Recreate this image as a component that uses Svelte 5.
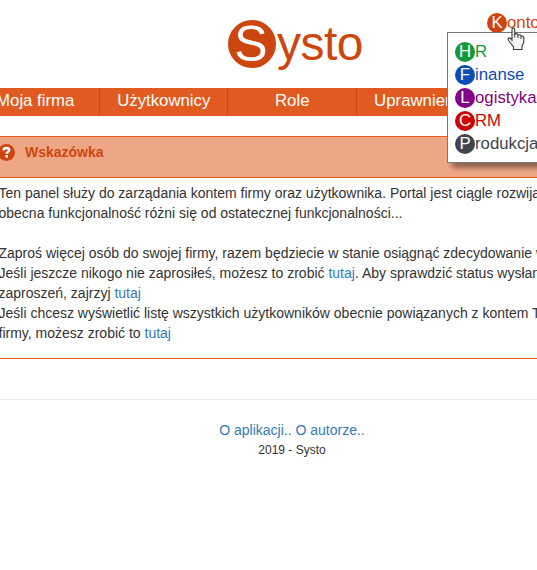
<script>
  const tabs = ['Moja firma', 'Użytkownicy', 'Role', 'Uprawnienia'];
  const modules = [
    { initial: 'H', rest: 'R', color: '#159838' },
    { initial: 'F', rest: 'inanse', color: '#0b4db5' },
    { initial: 'L', rest: 'ogistyka', color: '#820386' },
    { initial: 'C', rest: 'RM', color: '#cb0505' },
    { initial: 'P', rest: 'rodukcja', color: '#42444d' }
  ];
  const lines = [
    ['Ten panel służy do zarządania kontem firmy oraz użytkownika. Portal jest ciągle rozwijany,'],
    ['obecna funkcjonalność różni się od ostatecznej funkcjonalności...'],
    [],
    ['Zaproś więcej osób do swojej firmy, razem będziecie w stanie osiągnąć zdecydowanie więcej.'],
    ['Jeśli jeszcze nikogo nie zaprosiłeś, możesz to zrobić ', { label: 'tutaj' }, '. Aby sprawdzić status wysłanych'],
    ['zaproszeń, zajrzyj ', { label: 'tutaj' }],
    ['Jeśli chcesz wyświetlić listę wszystkich użytkowników obecnie powiązanych z kontem Twojej'],
    ['firmy, możesz zrobić to ', { label: 'tutaj' }]
  ];
</script>

<div class="page">
  <header>
    <div class="logo"><span class="disc">S</span><span class="name">ysto</span></div>
    <div class="account">
      <span class="item"><i>K</i>onto</span>
      <div class="menu">
        {#each modules as m}
          <a class="item" href="#top" style:--c={m.color}><i>{m.initial}</i>{m.rest}</a>
        {/each}
      </div>
      <svg class="pointer" width="18" height="24" viewBox="0 0 18 24">
        <path d="M5 14V2.6Q5 1 6.3 1Q7.7 1 7.7 2.6V7.2Q10.6 5.8 11 8Q13.6 7.2 14 9Q16.8 8.6 16.8 11V15.5L15 19V22.5H6.5V20L2 14Q0.5 11.8 1.6 11Q3 10.4 5 13Z" fill="#f6f3f7" stroke="#3a3a3a" stroke-width="1.1" />
        <path d="M7.7 7V10.5M11 8V11M14 9V12" fill="none" stroke="#3a3a3a" />
      </svg>
    </div>
  </header>

  <nav>
    {#each tabs as tab}<a href="#top">{tab}</a>{/each}
  </nav>

  <section>
    <h2>
      <svg width="17" height="17" viewBox="0 0 17 17">
        <circle cx="8.5" cy="8.5" r="8.5" fill="#cd460f" />
        <path d="M5.5 6.4Q5.8 4 8.5 4Q11.2 4 11.2 6Q11.2 7.2 9.7 8Q8.7 8.6 8.7 9.8" fill="none" stroke="#fff" stroke-width="2.5" />
        <path d="M7.4 11H10V13.5H7.4Z" fill="#fff" />
      </svg>
      <span>Wskazówka</span>
    </h2>
    <div class="body">
      {#each lines as line}
        <div class="line">{#each line as part}{#if part.label}<a href="#top">{part.label}</a>{:else}{part}{/if}{/each}</div>
      {/each}
    </div>
  </section>

  <footer>
    <div class="links"><a href="#top">O aplikacji..</a> <a href="#top">O autorze..</a></div>
    <div class="copy">2019 - Systo</div>
  </footer>
</div>

<style>
  :global(body) { background: #fff; }
  .page {
    width: 537px; height: 570px; overflow: hidden; position: relative;
    font: 14px/20px "Liberation Sans", Arial, sans-serif; color: #333;
  }
  a { text-decoration: none; color: #337ab7; }
  header { height: 88px; display: flex; }
  .logo { display: flex; margin: 20px 0 0 228px; height: 48px; color: #cd460f; font-size: 48px; line-height: 48px; }
  .disc {
    width: 48px; height: 48px; box-sizing: border-box; border-radius: 50%; background: #cd460f;
    color: #fff; text-align: center; font-size: 50px; padding-right: 2px;
  }
  .name { letter-spacing: -0.5px; padding-left: 1px; }
  .account { position: absolute; left: 487px; top: 11px; z-index: 2; color: #cd460f; }
  .item { display: flex; align-items: center; height: 23px; font-size: 16.8px; color: var(--c, #cd460f); white-space: nowrap; }
  .item i {
    width: 20px; height: 20px; border-radius: 50%; background: var(--c, #cd460f);
    color: #fff; font-style: normal; text-align: center; line-height: 20px; flex: none;
  }
  .menu {
    position: absolute; left: -40px; top: 21px; width: 120px; padding: 7px;
    border: 1px solid #777; background: #fff; box-shadow: 5px 5px 5px rgba(0, 0, 0, .4);
  }
  .pointer { position: absolute; left: 20px; top: 16px; }
  nav { display: flex; margin-left: -29px; width: 620px; height: 28px; background: #e15b20; }
  nav a {
    width: 128.5px; box-sizing: border-box; border-right: 1px solid #cd460f; flex: none;
    color: #fff; font-size: 16.8px; line-height: 25px; text-align: center; padding-left: 1px;
  }
  section { margin-top: 20px; border: solid #e15b20; border-width: 1px 0; height: 221px; }
  h2 {
    margin: 0; height: 40px; display: flex; align-items: flex-start; gap: 10px;
    background: #efa685; border-bottom: 1px solid #e15b20; color: #cd460f; font-size: 14px; line-height: 18px;
  }
  h2 svg { margin: 7px 0 0 -2px; }
  h2 span { margin-top: 6px; }
  .body { padding-top: 5px; margin-left: -1.5px; }
  .line { height: 20px; white-space: pre; }
  footer { margin-top: 40px; padding-top: 20px; border-top: 1px solid #eee; text-align: center; }
  .links { margin-left: 47px; }
  .copy { margin-left: 47px; font-size: 12px; }
</style>
